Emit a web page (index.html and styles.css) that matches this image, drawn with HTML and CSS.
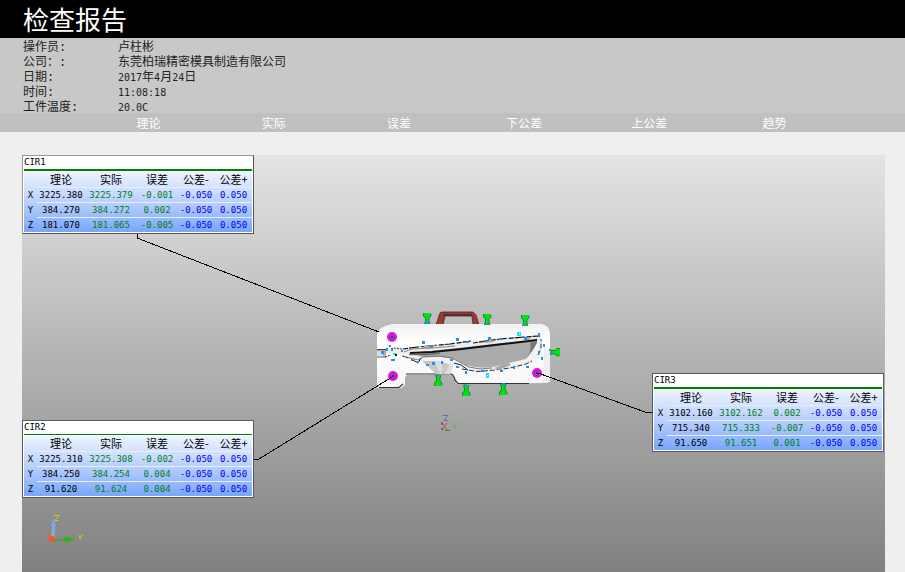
FILE: index.html
```html
<!DOCTYPE html>
<html lang="zh-CN">
<head>
<meta charset="utf-8">
<title>检查报告</title>
<link rel="stylesheet" href="styles.css">
</head>
<body>
<header class="title-bar"><h1>检查报告</h1></header>
<dl class="info">
<dt>操作员:</dt><dd>卢柱彬</dd>
<dt>公司：:</dt><dd>东莞柏瑞精密模具制造有限公司</dd>
<dt>日期:</dt><dd><span class="num">2017</span>年<span class="num">4</span>月<span class="num">24</span>日</dd>
<dt>时间:</dt><dd><span class="num">11:08:18</span></dd>
<dt>工件温度:</dt><dd><span class="num">20.0C</span></dd>
</dl>
<div class="columns"><span>理论</span><span>实际</span><span>误差</span><span>下公差</span><span>上公差</span><span>趋势</span></div>
<main>
<div class="stage">
<svg class="model" viewBox="22 155 863 417" aria-hidden="true">
<defs>
<linearGradient id="body" x1="0" y1="0" x2="0" y2="1"><stop offset="0" stop-color="#f2f2f2"/><stop offset=".3" stop-color="#fff"/><stop offset="1" stop-color="#f6f6f6"/></linearGradient>
<g id="pin"><path d="M-4 0H4V3L2 5V8L3 11H-3L-2 8V5L-4 3Z" fill="#00e01c"/><path d="M-3.500 0V3L-1.500 5V8L-2.500 11M4 1V3L2 5V8L3 11" fill="none" stroke="#157a1c" stroke-width=".8"/></g>
<g id="target"><circle r="5" fill="#f0f"/><circle r="3" fill="#b9b"/><circle r="2.500" fill="none" stroke="#505" stroke-width=".8"/><path d="M-1.500 0H1.500M0-1.500V1.500" stroke="#206" stroke-width="1"/></g>
</defs>
<path d="M436 325L440 313Q441 312 443 312H473L476 315L479 325H473L472 316H445L443 325Z" fill="#963a3a" stroke="#592020" stroke-width=".8"/>
<path d="M443 315H472" stroke="#222"/>
<path d="M377 388V334Q380 326 392 324H541Q549 325 550 333V381Q548 383 545 383L457 384Q455 382 455 379Q454 375 450 375H408Q405 375 405 379V384Q404 387 400 388Z" fill="url(#body)"/>
<use href="#pin" x="427" y="313"/><use href="#pin" x="487" y="314"/><use href="#pin" x="525" y="315"/>
<use href="#pin" transform="translate(438 386) scale(1 -1)"/><use href="#pin" transform="translate(466 396) scale(1 -1)"/><use href="#pin" transform="translate(503 395) scale(1 -1)"/>
<use href="#pin" transform="translate(560 352) rotate(90)"/>
<path d="M379 387.500H399L403 384M406 374H451Q454 375 455 380L458 383.500H529" fill="none" stroke="#333" stroke-width="1.200"/>
<path d="M544 347L550 351V382L543 383Z" fill="#eee"/>
<path d="M421 360L440 360L445 374H436Z" fill="#c9c9c9"/><path d="M435 361L440 374L450 374L455 362Z" fill="#dedede"/><path d="M443 362L441 374H445L450 363Z" fill="#c8c8c8"/>
<path d="M377 349.500H386V358H377Z" fill="#aaa"/><path d="M377 351H383V356H377Z" fill="#ddd"/><path d="M377 349.500H387" stroke="#444"/>
<path d="M386 349L405 348L430 345L471 341L505 338L532 336L541 335L540 341L504 345L465 349L430 352L410 354H386Z" fill="#eee"/>
<path d="M403 349L418 347L450 344L471 341M473 343L500 339L524 337L540 336" fill="none" stroke="#111" stroke-width="1.200" stroke-dasharray="5 1 10 2"/>
<path d="M424 346L436 345L432 348H422ZM482 342L494 340V342L486 343ZM522 339L532 337L529 340Z" fill="#aaa"/>
<path d="M404 352L412 349L432 348L455 346" fill="none" stroke="#888"/>
<path d="M407 353L430 351L466 347L502 343L537 340V352L533 359L522 362L508 364L493 368L478 369L465 365L453 360L440 358L423 357L417 356L425 354Z" fill="#ababab"/>
<path d="M410 353L432 352L462 349L495 345L529 341L537 340" fill="none" stroke="#111" stroke-width="2"/>
<path d="M409 354.500H428L440 353" fill="none" stroke="#666" stroke-width="1.500"/>
<path d="M530 343L537 341V351L531 360L527 357Q532 351 530 343Z" fill="#777"/>
<path d="M402 354L412 356L422 359L430 357H441L455 359L466 365Q479 369 493 367L509 363L526 359L533 350L538 341L542 342V355L537 361L526 365L509 369L493 372L477 373L465 371L452 365L439 361L424 361L418 360Z" fill="#f2f2f2"/>
<path d="M402 356L418 360L423 357L440 356L452 358L469 367L480 369L492 368" fill="none" stroke="#777"/>
<path d="M413 360L418 363L421 358M454 363L461 365L468 370" fill="none" stroke="#222"/>
<path d="M462 369L478 371.500L495 370L510 368L526 364L532 361M538 355L541 348V339" fill="none" stroke="#333" stroke-dasharray="5 2"/>
<path d="M494 368L508 362L511 365L499 370Z" fill="#aaa"/>
<path d="M391 349L395 348L402 349M385 357L391 355M392 359V361M403 356L408 358" fill="none" stroke="#333" stroke-dasharray="2 1"/>
<path d="M389 345h2v2h-2zM386 348h2v3h-2zM381 351h3v3h-3zM391 359h4v2h-4zM391 349h2v2h-2zM401 350h2v2h-2zM422 341h3v3h-3zM456 338h3v3h-3zM430 346h3v2h-3zM466 341h3v2h-3zM488 337h3v3h-3zM500 338h3v2h-3zM524 337h3v3h-3zM538 333h2v3h-2zM543 344h2v3h-2zM538 351h2v3h-2zM541 357h2v3h-2zM526 366h3v2h-3zM513 366h2v3h-2zM500 370h3v2h-3zM481 370h3v2h-3zM465 371h2v3h-2zM456 366h3v2h-3zM450 359h3v2h-3zM441 361h2v3h-2zM432 362h3v3h-3zM426 364h3v2h-3zM417 361h2v2h-2zM411 359h2v2h-2zM425 321h4v3h-4zM486 323h3v2h-3zM523 323h3v2h-3zM436 374h3v2h-3zM464 384h3v2h-3zM502 383h3v2h-3zM550 351h2v3h-2z" fill="#278fee"/>
<path d="M517 332h4v4h-4zM486 373h3v5h-3zM393 353h3v2h-3z" fill="#17e5eb"/><path d="M519 333h1v1h-1zM487 375h1v1h-1z" fill="#fff"/><path d="M395 354h2v2h-2z" fill="#111"/>
<use href="#target" x="392" y="337"/><use href="#target" x="393" y="376"/><use href="#target" x="537" y="373" />
<path d="M137 234V238L379 332M254 459H259L392 377M538 373L645 412H652" fill="none" stroke="#000" shape-rendering="crispEdges"/>
<g fill="none" stroke-width="1"><path d="M443 415.500H448L444 420.500H448" stroke="#6666bd"/><path d="M442 423L447 430M447 423L442 430M442 430h1" stroke="#c04b50"/><path d="M453 423L455 426L458 423M455 426V429" stroke="#50b950"/><path d="M442 422V425M442 428V430" stroke="#64206d"/><path d="M445 430.500H450" stroke="#278a37"/></g>
<path d="M52 538V526H51L53 519L56 526H55V538Z" fill="#80a5f5"/><path d="M54 540H67" stroke="#18ac00"/><path d="M65 537L76 539.500L65 542Z" fill="#18bd00"/><circle cx="51.500" cy="538.500" r="3" fill="#ff5124"/>
<path d="M54 515.500H59L55 520.500H59M78 535L80 537L83 535M80 537V540M51 531L53 534L51 536" fill="none" stroke="#cdc71d"/>
</svg>
<section class="card cir1"><h2>CIR1</h2><table><thead><tr><th></th><th>理论</th><th>实际</th><th>误差</th><th>公差-</th><th>公差+</th></tr></thead><tbody>
<tr><th>X</th><td>3225.380</td><td>3225.379</td><td>-0.001</td><td>-0.050</td><td>0.050</td></tr>
<tr><th>Y</th><td>384.270</td><td>384.272</td><td>0.002</td><td>-0.050</td><td>0.050</td></tr>
<tr><th>Z</th><td>181.070</td><td>181.065</td><td>-0.005</td><td>-0.050</td><td>0.050</td></tr></tbody></table></section>
<section class="card cir2"><h2>CIR2</h2><table><thead><tr><th></th><th>理论</th><th>实际</th><th>误差</th><th>公差-</th><th>公差+</th></tr></thead><tbody>
<tr><th>X</th><td>3225.310</td><td>3225.308</td><td>-0.002</td><td>-0.050</td><td>0.050</td></tr>
<tr><th>Y</th><td>384.250</td><td>384.254</td><td>0.004</td><td>-0.050</td><td>0.050</td></tr>
<tr><th>Z</th><td>91.620</td><td>91.624</td><td>0.004</td><td>-0.050</td><td>0.050</td></tr></tbody></table></section>
<section class="card cir3"><h2>CIR3</h2><table><thead><tr><th></th><th>理论</th><th>实际</th><th>误差</th><th>公差-</th><th>公差+</th></tr></thead><tbody>
<tr><th>X</th><td>3102.160</td><td>3102.162</td><td>0.002</td><td>-0.050</td><td>0.050</td></tr>
<tr><th>Y</th><td>715.340</td><td>715.333</td><td>-0.007</td><td>-0.050</td><td>0.050</td></tr>
<tr><th>Z</th><td>91.650</td><td>91.651</td><td>0.001</td><td>-0.050</td><td>0.050</td></tr></tbody></table></section>
</div>
</main>
</body>
</html>
```
FILE: styles.css
```css
* { box-sizing: border-box; }
body {
  margin: 0;
  min-height: 100vh;
  display: flex;
  flex-direction: column;
  background: #efefef;
  color: #222;
  font: 12px/15px "Noto Sans CJK SC", sans-serif;
}
.title-bar { padding: 1px 23px; background: #000; color: #fff; }
h1 { margin: 0; font-size: 26px; line-height: 36px; font-weight: 400; }
.info {
  margin: 0;
  padding: 0 23px;
  display: grid;
  grid-template-columns: 95px 1fr;
  grid-auto-rows: 15px;
  background: #c8c8c8;
  font-family: "Liberation Mono", "Noto Sans CJK SC", monospace;
  line-height: 20px;
}
.info dt, .info dd { margin: 0; white-space: nowrap; }
.num { font-family: "DejaVu Sans Mono", monospace; font-size: 10px; }
.columns {
  display: grid;
  grid-template-columns: repeat(6, 1fr);
  padding: 0 68px 0 86px;
  background: #c0c0c0;
  color: #fff;
  line-height: 19px;
  text-align: center;
}
main { flex: 1; display: flex; padding: 23px 20px 0 22px; }
.stage {
  flex: 1;
  position: relative;
  background: linear-gradient(#e4e4e4, #808080);
}
.model { display: block; width: 100%; }
.card {
  position: absolute;
  width: 232px;
  padding: 0 1px 1px;
  border: 1px solid #555a66;
  background: #fff;
  color: #000;
}
.cir1 { left: 0; top: 0; border-color: #999 #555 #555 #999; }
.cir2 { left: 0; top: 265px; }
.cir3 { left: 630px; top: 218px; }
.card h2 {
  margin: 0;
  border-bottom: 2px solid #008000;
  font: 400 9px/13px "DejaVu Sans Mono", monospace;
}
.cir2 h2 { border-bottom-width: 1px; }
table {
  width: 100%;
  margin-top: 1px;
  table-layout: fixed;
  border-collapse: collapse;
  background: linear-gradient(#edf3ff, #b9d0fc 50%, #78a6fb);
}
th, td {
  height: 15px;
  padding: 0;
  line-height: 14px;
  font-weight: 400;
  text-align: center;
  white-space: nowrap;
}
thead th { font-size: 11px; }
tbody th, td { font-size: 9px; font-family: "DejaVu Sans Mono", monospace; }
th + th, td { border-bottom: 1px solid #e8edfb; }
tr:last-child td { border-bottom: 0; }
th:nth-child(1) { width: 13px; }
th:nth-child(2) { width: 48px; }
th:nth-child(3) { width: 52px; }
th:nth-child(4) { width: 40px; }
th:nth-child(5) { width: 38px; }
td:nth-child(3), td:nth-child(4) { color: #008020; }
td:nth-child(n+5) { color: #0000f0; }
```
